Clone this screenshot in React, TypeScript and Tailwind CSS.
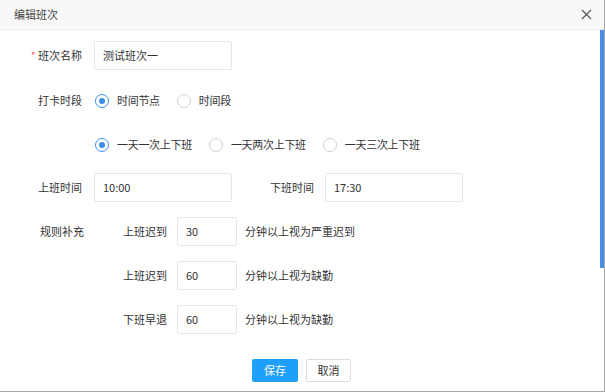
import React from 'react';

const font = { fontFamily: '"Microsoft YaHei", "Noto Sans CJK SC", "Noto Sans", sans-serif' };

const Radio = ({ checked, label, className = '' }: { checked?: boolean; label: string; className?: string }) => (
  <label className={`flex items-center ${className}`}>
    <span
      className={`w-[14px] h-[14px] rounded-full border flex items-center justify-center bg-white ${
        checked ? 'border-[#3b8fe6]' : 'border-[#cfcfcf]'
      }`}
    >
      {checked && <span className="w-[6px] h-[6px] rounded-full bg-[#3b8fe6]" />}
    </span>
    <span className="ml-[8px] tracking-[-0.3px]">{label}</span>
  </label>
);

const Field = ({ value, width }: { value: string; width: string }) => (
  <div className={`${width} h-[29px] border border-[#e6e6e6] rounded-[2px] flex items-center pl-[8px] text-[#333]`}>
    {value}
  </div>
);

const RuleRow = ({ label, value, tail }: { label: string; value: string; tail: string }) => (
  <div className="flex items-center h-[29px]">
    <div className="w-[123px]" />
    <span className="w-[54px]">{label}</span>
    <Field value={value} width="w-[60px]" />
    <span className="ml-[8px]">{tail}</span>
  </div>
);

export default function App() {
  return (
    <div
      className="w-[605px] h-[392px] bg-white border-r border-b border-[#a8a8a8] flex flex-col relative overflow-hidden text-[11px] text-[#333]"
      style={font}
    >
      {/* header */}
      <div className="h-[30px] shrink-0 bg-[#f8f8f8] border-b border-[#ececec] flex items-center justify-between pl-[14px] pr-[12px]">
        <span className="text-[#444]">编辑班次</span>
        <svg width="11" height="11" viewBox="0 0 11 11" className="text-[#555]">
          <path d="M1 1L10 10M10 1L1 10" stroke="currentColor" strokeWidth="1.2" />
        </svg>
      </div>

      {/* scrollbar */}
      <div className="absolute right-0 top-[30px] w-[4px] h-[238px] bg-[#4a90e2]" />

      <div className="flex flex-col">
        <div className="flex items-center h-[29px] mt-[11px]">
          <div className="w-[82px] text-right">
            <span className="text-[#f56c6c] mr-[2px]">*</span>班次名称
          </div>
          <div className="ml-[12px]">
            <Field value="测试班次一" width="w-[138px]" />
          </div>
        </div>

        <div className="flex items-center h-[29px] mt-[16px]">
          <div className="w-[82px] text-right">打卡时段</div>
          <div className="ml-[13px] flex items-center">
            <Radio checked label="时间节点" />
            <Radio label="时间段" className="ml-[17px]" />
          </div>
        </div>

        <div className="flex items-center h-[29px] mt-[15px]">
          <div className="w-[82px]" />
          <div className="ml-[13px] flex items-center">
            <Radio checked label="一天一次上下班" />
            <Radio label="一天两次上下班" className="ml-[17px]" />
            <Radio label="一天三次上下班" className="ml-[17px]" />
          </div>
        </div>

        <div className="flex items-center h-[29px] mt-[14px]">
          <div className="w-[82px] text-right">上班时间</div>
          <div className="ml-[12px]">
            <Field value="10:00" width="w-[138px]" />
          </div>
          <div className="w-[82px] text-right">下班时间</div>
          <div className="ml-[11px]">
            <Field value="17:30" width="w-[138px]" />
          </div>
        </div>

        <div className="flex items-center h-[29px] mt-[15px] relative">
          <div className="absolute left-[40px]">规则补充</div>
          <div className="w-[123px]" />
          <span className="w-[54px]">上班迟到</span>
          <Field value="30" width="w-[60px]" />
          <span className="ml-[8px]">分钟以上视为严重迟到</span>
        </div>

        <div className="mt-[15px]">
          <RuleRow label="上班迟到" value="60" tail="分钟以上视为缺勤" />
        </div>
        <div className="mt-[15px]">
          <RuleRow label="下班早退" value="60" tail="分钟以上视为缺勤" />
        </div>

        <div className="flex items-center mt-[25px] ml-[252px]">
          <button className="w-[46px] h-[23px] rounded-[2px] bg-[#1e9ffa] text-white">保存</button>
          <button className="w-[45px] h-[23px] rounded-[2px] border border-[#dcdcdc] bg-white text-[#333] ml-[8px]">取消</button>
        </div>
      </div>
    </div>
  );
}
